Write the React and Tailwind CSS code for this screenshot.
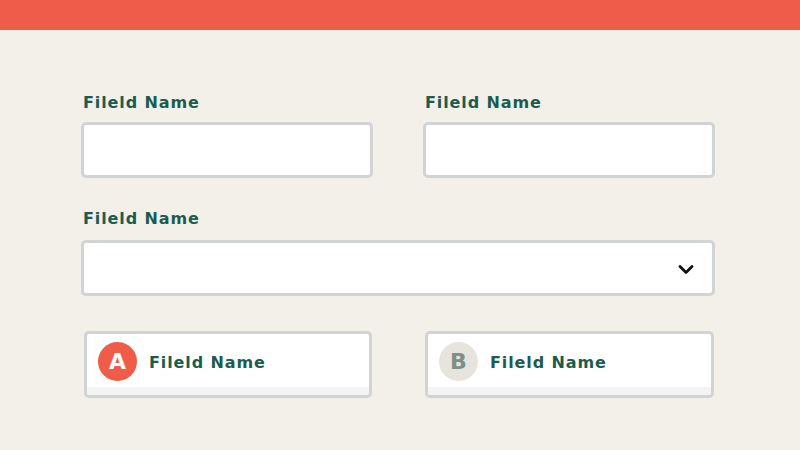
import React from "react";

const font = { fontFamily: '"DejaVu Sans", "Liberation Sans", sans-serif' };

function Label({ children }) {
  return (
    <div className="text-[16px] leading-[20px] font-bold text-[#1c5c4e] tracking-[0.9px] h-[20px] whitespace-nowrap" style={font}>
      {children}
    </div>
  );
}

function Input() {
  return <div className="h-[56px] rounded-[5px] border-[3px] border-[#d1d4d4] bg-white" />;
}

function Choice({ letter, active }) {
  return (
    <div className="h-[67px] rounded-[5px] border-[3px] border-[#d1d4d4] bg-white flex flex-col overflow-hidden">
      <div className="flex-1 flex items-center pl-[11px] gap-[12px] pt-[1px]">
        <div
          className={
            "w-[39px] h-[39px] rounded-full flex items-center justify-center text-[22px] font-bold " +
            (active ? "bg-[#ef5d4a] text-white" : "bg-[#e7e4de] text-[#7d8f87]")
          }
          style={font}
        >
          {letter}
        </div>
        <div className="text-[16px] leading-[20px] font-bold text-[#1c5c4e] tracking-[0.9px] mt-[3px] whitespace-nowrap" style={font}>
          Fileld Name
        </div>
      </div>
      <div className="h-[8px] bg-[#f4f4f4]" />
    </div>
  );
}

export default function App() {
  return (
    <div className="w-[800px] h-[450px] bg-[#f3f0ea] overflow-hidden">
      <div className="h-[30px] bg-[#ef5d4a]" />
      <div className="w-[634px] ml-[81px] pt-[63px]">
        <div className="grid grid-cols-2 gap-x-[50px]">
          <div>
            <div className="pl-[2px]"><Label>Fileld Name</Label></div>
            <div className="mt-[9px]"><Input /></div>
          </div>
          <div>
            <div className="pl-[2px]"><Label>Fileld Name</Label></div>
            <div className="mt-[9px]"><Input /></div>
          </div>
        </div>
        <div className="mt-[31px] pl-[2px]"><Label>Fileld Name</Label></div>
        <div className="mt-[11px] h-[56px] rounded-[5px] border-[3px] border-[#d1d4d4] bg-white flex items-center justify-end pr-[18px]">
          <svg width="16" height="11" viewBox="0 0 16 11" className="mt-[2px]">
            <path d="M2 2.5 L8 8.5 L14 2.5" fill="none" stroke="#111" strokeWidth="2.8" strokeLinecap="round" strokeLinejoin="round" />
          </svg>
        </div>
        <div className="mt-[35px] flex pl-[3px]">
          <div className="w-[288px]"><Choice letter="A" active /></div>
          <div className="w-[289px] ml-[53px]"><Choice letter="B" /></div>
        </div>
      </div>
    </div>
  );
}
